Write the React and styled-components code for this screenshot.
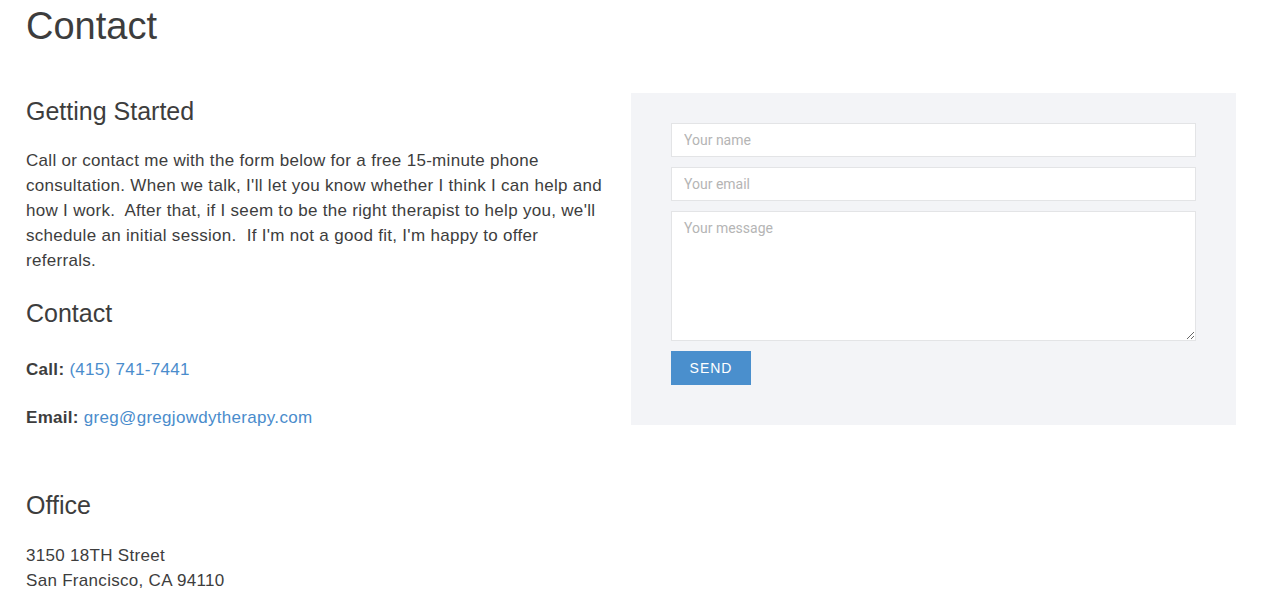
import React from "react";
import styled, { createGlobalStyle } from "styled-components";

const GlobalStyle = createGlobalStyle`
  html, body {
    margin: 0;
    padding: 0;
    background: #fff;
  }
  body {
    font-family: "Liberation Sans", Arial, sans-serif;
    color: #3d3d3d;
  }
`;

const Page = styled.div`
  padding: 0 43px 0 26px;
`;

const Title = styled.h1`
  font-size: 38px;
  font-weight: 400;
  line-height: 44px;
  margin: 4px 0 0;
`;

const Row = styled.div`
  display: flex;
  align-items: flex-start;
  gap: 26px;
  margin-top: 48px;
`;

const Column = styled.div`
  width: 579px;
  flex: none;
`;

const Heading = styled.h3`
  font-size: 25px;
  font-weight: 400;
  line-height: 30px;
  margin: ${(p) => p.$top || "0"} 0 0;
`;

const Text = styled.p`
  font-size: 17px;
  line-height: 25px;
  letter-spacing: 0.3px;
  margin: ${(p) => p.$top || "0"} 0 0;
`;

const Label = styled.strong`
  font-weight: 700;
`;

const Link = styled.a`
  color: #4a8ccc;
  text-decoration: none;
`;

const FormPanel = styled.form`
  width: 605px;
  box-sizing: border-box;
  background: #f3f4f7;
  padding: 30px 40px 40px;
  display: flex;
  flex-direction: column;
  gap: 10px;
  margin-top: -3px;
`;

const Field = styled.input`
  box-sizing: border-box;
  width: 525px;
  height: 34px;
  border: 1px solid #e3e4e6;
  background: #fff;
  padding: 0 12px;
  font-family: Roboto, "Liberation Sans", sans-serif;
  font-size: 14px;
  color: #555;
  outline: none;
  &::placeholder {
    color: #b5b5b5;
  }
`;

const Message = styled.textarea`
  box-sizing: border-box;
  width: 525px;
  height: 130px;
  border: 1px solid #e3e4e6;
  background: #fff;
  padding: 8px 12px;
  font-family: Roboto, "Liberation Sans", sans-serif;
  font-size: 14px;
  color: #555;
  outline: none;
  resize: vertical;
  &::placeholder {
    color: #b5b5b5;
  }
`;

const SendButton = styled.button`
  width: 80px;
  height: 34px;
  border: none;
  background: #4a8fcd;
  color: #fff;
  font-family: "Liberation Sans", Arial, sans-serif;
  font-size: 14px;
  letter-spacing: 1px;
  text-transform: uppercase;
  cursor: pointer;
`;

const Office = styled.section`
  margin-top: 60px;
`;

export default function App() {
  return (
    <>
      <GlobalStyle />
      <Page>
        <Title>Contact</Title>
        <Row>
          <Column>
            <Heading>Getting Started</Heading>
            <Text $top="22px">
              Call or contact me with the form below for a free 15-minute phone
              consultation. When we talk, I'll let you know whether I think I can
              help and how I work.&nbsp; After that, if I seem to be the right
              therapist to help you, we'll schedule an initial session.&nbsp; If
              I'm not a good fit, I'm happy to offer referrals.
            </Text>
            <Heading $top="25px">Contact</Heading>
            <Text $top="29px">
              <Label>Call:</Label> <Link href="#">(415) 741-7441</Link>
            </Text>
            <Text $top="23px">
              <Label>Email:</Label>{" "}
              <Link href="#">greg@gregjowdytherapy.com</Link>
            </Text>
          </Column>
          <FormPanel onSubmit={(e) => e.preventDefault()}>
            <Field type="text" placeholder="Your name" />
            <Field type="email" placeholder="Your email" />
            <Message placeholder="Your message" />
            <div>
              <SendButton type="submit">Send</SendButton>
            </div>
          </FormPanel>
        </Row>
        <Office>
          <Heading>Office</Heading>
          <Text $top="23px">
            3150 18TH Street
            <br />
            San Francisco, CA 94110
          </Text>
        </Office>
      </Page>
    </>
  );
}
